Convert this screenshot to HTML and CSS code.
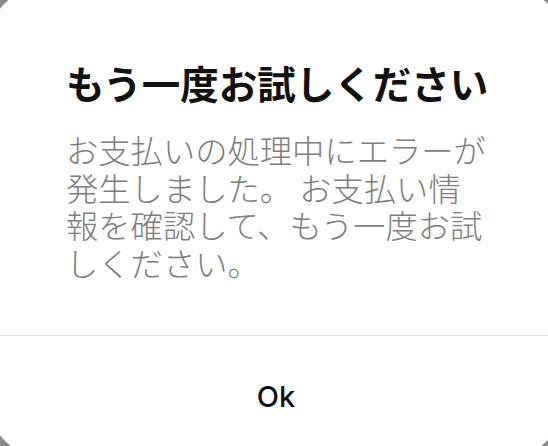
FILE: index.html
```html
<!DOCTYPE html>
<html lang="ja">
<head>
    <meta charset="UTF-8" />
    <meta name="viewport" content="width=device-width, initial-scale=1.0" />
    <title>もう一度お試しください</title>
    <link rel="stylesheet" href="styles.css">
</head>
<body>
    <div class="dialog">
        <div class="dialog-body">
            <h2 class="dialog-title">もう一度お試しください</h2>
            <p class="dialog-message">お支払いの処理中にエラーが発生しました。 お支払い情報を確認して、もう一度お試しください。</p>
        </div>
        <div class="dialog-actions">
            <button class="button">Ok</button>
        </div>
    </div>
</body>
</html>
```

FILE: styles.css
```css
html, body {
    width: 100%;
    height: 100%;
    margin: 0;
    padding: 0;
    overflow: hidden;
    background: #8a8a8a;
    font-family: "Noto Sans CJK JP", sans-serif;
}

.dialog {
    display: flex;
    flex-direction: column;
    width: 578px;
    height: 472px;
    margin: -14px 0 0 -13px;
    background: #fff;
    border-radius: 60px;
}

.dialog-body {
    flex: 1;
    padding: 71px 79px 0;
}

.dialog-title {
    margin: 0;
    color: #111;
    font-size: 38.5px;
    font-weight: 700;
    line-height: 50px;
    white-space: nowrap;
}

.dialog-message {
    margin: 24px 0 0;
    width: 424px;
    color: #7e7e7e;
    font-size: 32.3px;
    font-weight: 300;
    line-height: 37.5px;
}

.dialog-actions {
    display: flex;
    height: 122px;
    border-top: 1px solid #e2e2e2;
}

.button {
    flex: 1;
    padding: 0 0 2px;
    background: none;
    border: none;
    color: #111;
    font-family: Inter, "Liberation Sans", sans-serif;
    font-size: 29px;
    font-weight: 500;
}
```
